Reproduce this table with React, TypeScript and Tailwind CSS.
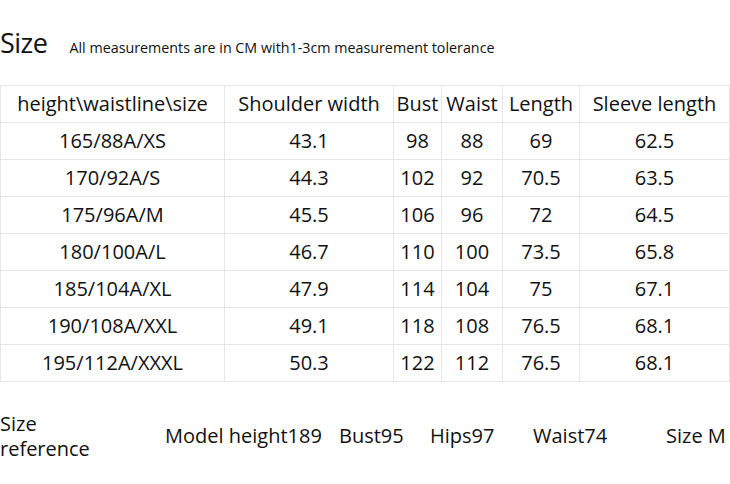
const rows = [
  ['165/88A/XS', '43.1', '98', '88', '69', '62.5'],
  ['170/92A/S', '44.3', '102', '92', '70.5', '63.5'],
  ['175/96A/M', '45.5', '106', '96', '72', '64.5'],
  ['180/100A/L', '46.7', '110', '100', '73.5', '65.8'],
  ['185/104A/XL', '47.9', '114', '104', '75', '67.1'],
  ['190/108A/XXL', '49.1', '118', '108', '76.5', '68.1'],
  ['195/112A/XXXL', '50.3', '122', '112', '76.5', '68.1'],
]

const headers = ['height\\waistline\\size', 'Shoulder width', 'Bust', 'Waist', 'Length', 'Sleeve length']
const widths = ['w-[224px]', 'w-[169px]', 'w-[48px]', 'w-[61px]', 'w-[77px]', 'w-[150px]']

export default function App() {
  return (
    <div className="w-[730px] h-[484px] bg-white text-[#111] font-['Open_Sans',sans-serif] overflow-hidden">
      <div className="flex items-baseline h-[66px] pt-[29px]">
        <h1 className="text-[27px] leading-none tracking-[-0.5px]">Size</h1>
        <p className="ml-[22px] text-[14.3px] leading-none">All measurements are in CM with1-3cm measurement tolerance</p>
      </div>
      <table className="table-fixed border-collapse mt-[19px] w-[730px]">
        <thead>
          <tr className="h-[37px]">
            {headers.map((h, i) => (
              <th key={h} className={`${widths[i]} border border-[#e6e6e6] font-normal text-[20px] text-center whitespace-nowrap p-0`}>
                {h}
              </th>
            ))}
          </tr>
        </thead>
        <tbody>
          {rows.map((r) => (
            <tr key={r[0]} className="h-[37px]">
              {r.map((c, i) => (
                <td key={i} className="border border-[#e6e6e6] text-[20px] text-center p-0">
                  {c}
                </td>
              ))}
            </tr>
          ))}
        </tbody>
      </table>
      <div className="flex items-center mt-[29px] text-[20px]">
        <div className="w-[165px] leading-[25px]">
          Size
          <br />
          reference
        </div>
        <span className="w-[174px]">Model height189</span>
        <span className="w-[91px]">Bust95</span>
        <span className="w-[103px]">Hips97</span>
        <span className="w-[133px]">Waist74</span>
        <span>Size M</span>
      </div>
    </div>
  )
}
